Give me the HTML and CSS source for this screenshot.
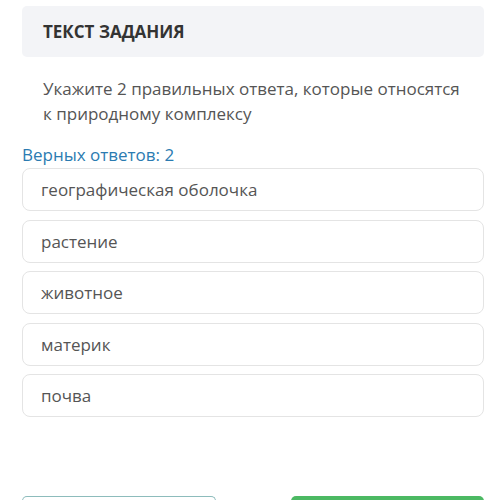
FILE: index.html
```html
<!DOCTYPE html>
<html lang="ru">
<head>
<meta charset="utf-8">
<link rel="stylesheet" href="styles.css">
</head>
<body>
<div class="page">
  <div class="task-head">ТЕКСТ ЗАДАНИЯ</div>
  <div class="task-text">Укажите 2 правильных ответа, которые относятся к природному комплексу</div>
  <div class="count">Верных ответов: 2</div>
  <div class="options">
    <div class="option">географическая оболочка</div>
    <div class="option">растение</div>
    <div class="option">животное</div>
    <div class="option">материк</div>
    <div class="option">почва</div>
  </div>
  <div class="actions">
    <div class="btn btn-outline"></div>
    <div class="btn btn-green"></div>
  </div>
</div>
</body>
</html>
```
FILE: styles.css
```css
html, body {
  margin: 0;
  padding: 0;
  background: #fff;
  overflow: hidden;
}
body {
  font-family: "Open Sans", "Noto Sans", sans-serif;
  color: #555;
}
.page {
  padding: 6px 16px 0 22px;
}
.task-head {
  background: #f3f4f7;
  border-radius: 5px;
  height: 51px;
  box-sizing: border-box;
  padding-left: 21px;
  display: flex;
  align-items: center;
  font-weight: 700;
  font-size: 17px;
  color: #333;
}
.task-text {
  margin-top: 19px;
  padding-left: 21px;
  padding-right: 16px;
  font-size: 17px;
  line-height: 25px;
  color: #555;
}
.count {
  margin-top: 17px;
  font-size: 17px;
  line-height: 24px;
  color: #2b7bb1;
}
.options {
  margin-top: 1px;
  display: flex;
  flex-direction: column;
  gap: 8.5px;
}
.option {
  height: 43px;
  box-sizing: border-box;
  border: 1px solid #e4e4e4;
  border-radius: 8px;
  padding-left: 18px;
  display: flex;
  align-items: center;
  font-size: 17px;
  color: #555;
}
.actions {
  margin-top: 79px;
  display: flex;
  justify-content: space-between;
}
.btn {
  width: 194px;
  height: 5px;
  box-sizing: border-box;
  border-radius: 6px 6px 0 0;
}
.btn-outline {
  border: 1px solid #8dbcbc;
  border-bottom: none;
}
.btn-green {
  width: 193px;
  background: #4cb963;
}
```
